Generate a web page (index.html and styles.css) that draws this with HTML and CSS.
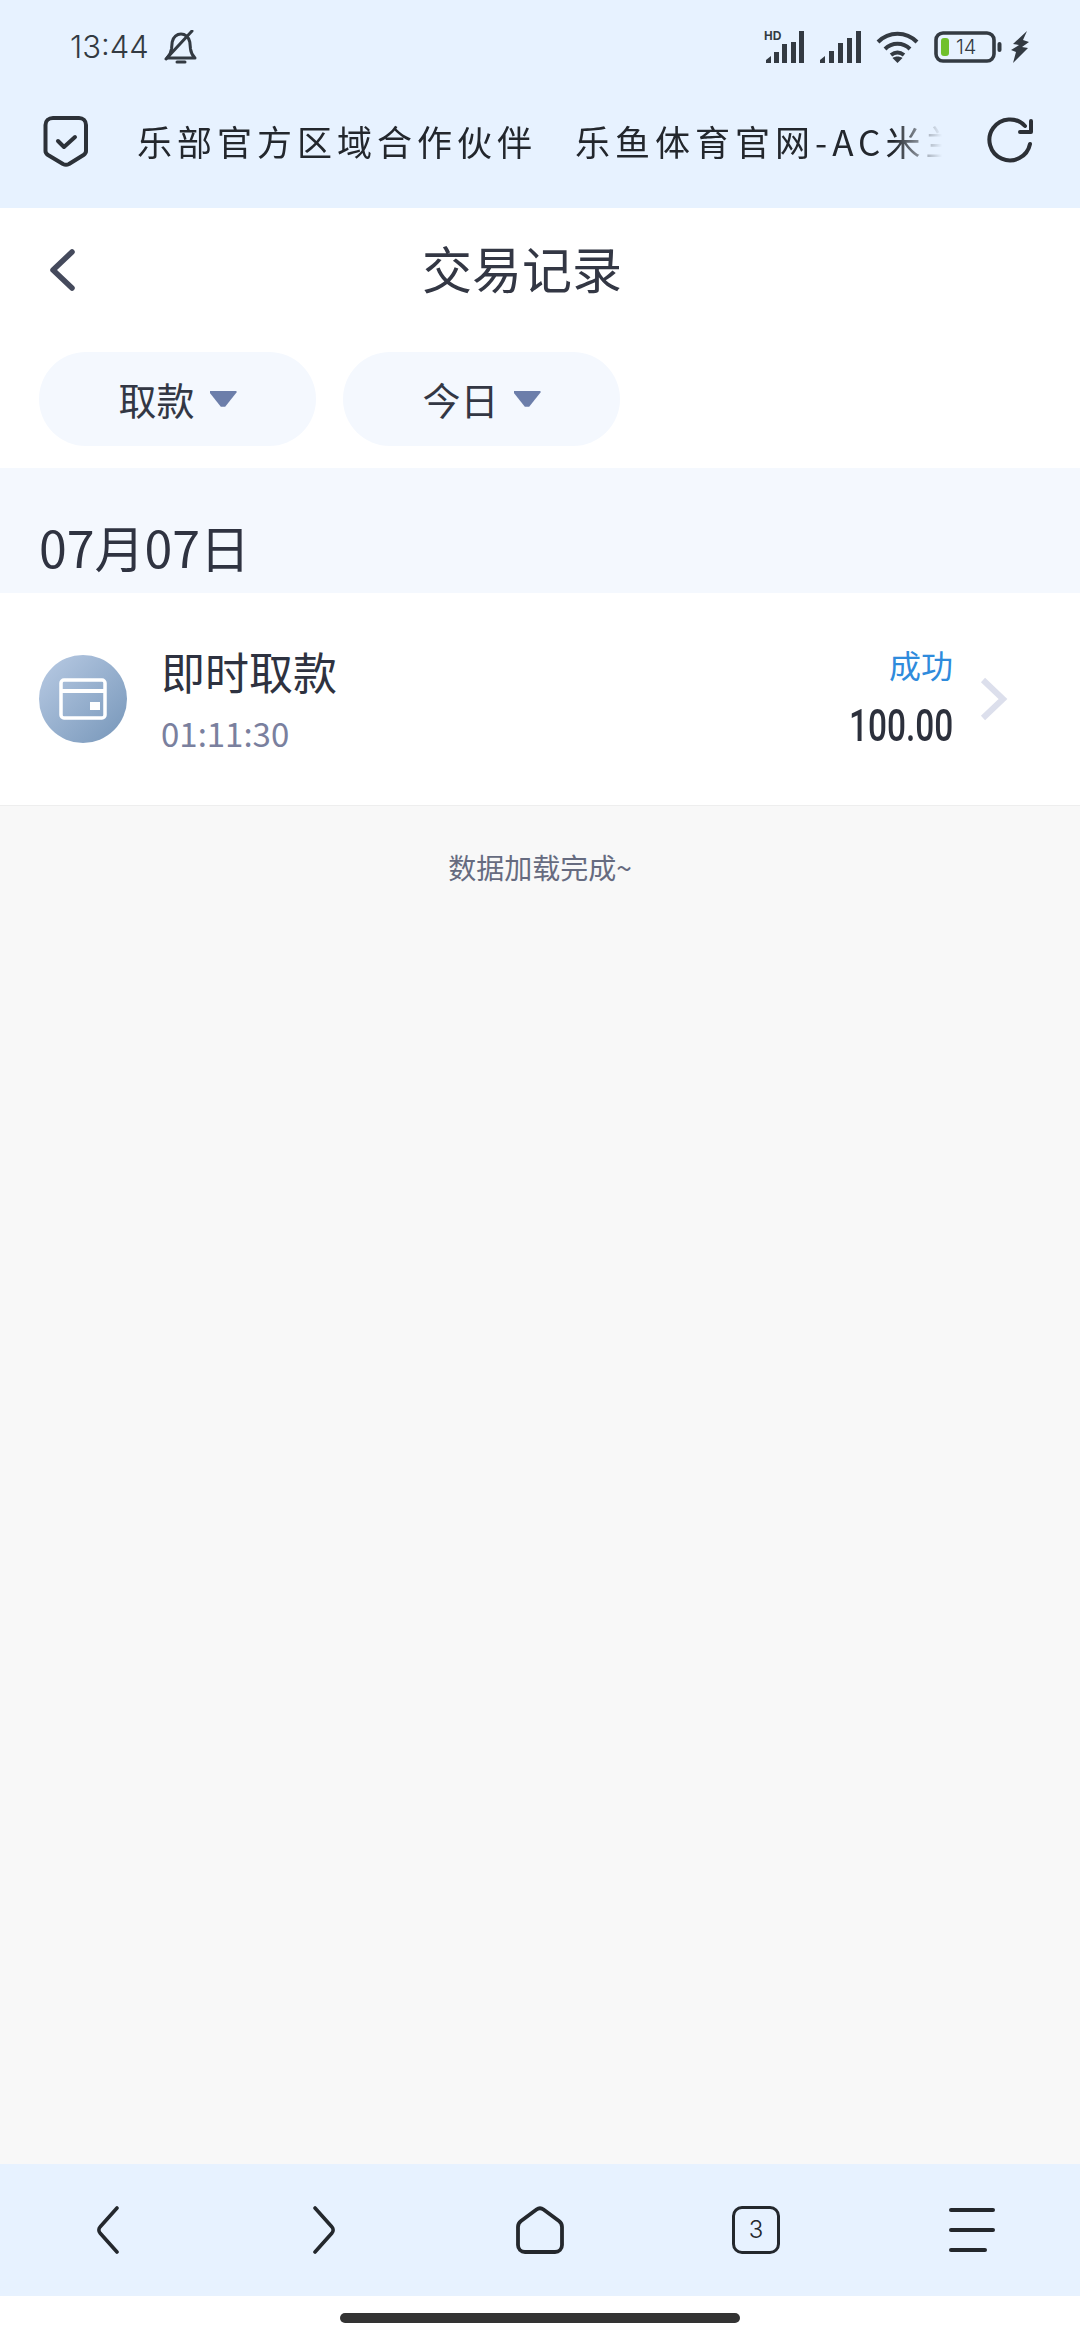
FILE: index.html
```html
<!DOCTYPE html>
<html lang="zh-CN">
<head>
<meta charset="utf-8">
<title>交易记录</title>
<link rel="stylesheet" href="styles.css">
</head>
<body>
<div class="page">
  <header class="browser-top">
    <div class="status">
      <div class="status-left">
        <span class="clock">13:44</span>
        <svg class="bell" viewBox="0 0 34 34" fill="none" stroke="#333a42" stroke-width="3" stroke-linecap="round" stroke-linejoin="round">
          <path d="M3 28h28c-3-3-4-5-4.500-9l-.7-7C25 7 21 4 17 4s-8 3-8.800 8l-.7 7C7 23 6 25 3 28z"/>
          <path d="M2 29L28 1"/>
          <path d="M13 32h8" stroke-width="3"/>
        </svg>
      </div>
      <div class="status-right">
        <svg class="sig-hd" viewBox="0 0 44 34">
          <text x="0" y="10" class="hd-text">HD</text>
          <path fill="#333a42" d="M2 33v-3l5-4v7zM10 33V22h5v11zM18 33V14h5v19zM27 33V12h5v21zM35 33V1h5v32z"/>
        </svg>
        <svg class="sig" viewBox="0 0 41 34">
          <path fill="#333a42" d="M0 33v-3l5-4v7zM9 33V21h5v12zM18 33V13h5v20zM27 33V8h5v25zM36 33V1h5v32z"/>
        </svg>
        <svg class="wifi" viewBox="0 0 43 34" fill="none" stroke="#333a42" stroke-width="4">
          <path d="M2 12C13 1 30 1 41 12"/>
          <path d="M9 19c7-7 18-7 25 0"/>
          <path d="M15 25c4-3 9-3 13 0"/>
          <path fill="#333a42" stroke="none" d="M21.500 33l-5-5c3-2 7-2 10 0z"/>
        </svg>
        <svg class="battery" viewBox="0 0 68 34">
          <rect x="2" y="3" width="58" height="28" rx="7" fill="none" stroke="#333a42" stroke-width="3.600"/>
          <rect x="7" y="8" width="8" height="18" rx="3" fill="#6fc02c"/>
          <text x="22" y="24" class="bat-text">14</text>
          <rect x="63.500" y="12" width="4" height="10" rx="2" fill="#333a42"/>
        </svg>
        <svg class="bolt" viewBox="0 0 20 34">
          <path fill="#333a42" d="M17 1L3 14l6 1-8 5 5 2-3 11 15-15-6-1 7-5-6-2z"/>
        </svg>
      </div>
    </div>
    <div class="address">
      <svg class="shield" viewBox="0 0 46 52" fill="none" stroke="#2c3138" stroke-width="4" stroke-linecap="round" stroke-linejoin="round">
        <path d="M10 3h26c4 0 7 3 7 7v26c0 2-1 3-2.500 4L26 49c-2 1-4 1-6 0L5 40c-1.500-1-2.500-2-2.500-4V10c0-4 3-7 7.500-7z"/>
        <path d="M15 26l6 6 11-10"/>
      </svg>
      <div class="marquee">
        <span class="mq-first">乐部官方区域合作伙伴</span><span class="mq-second">乐鱼体育官网-AC米兰</span>
      </div>
      <svg class="reload" viewBox="0 0 48 48" fill="none" stroke="#2c3036" stroke-width="4" stroke-linecap="round" stroke-linejoin="round">
        <path d="M43 27a20.500 20.500 0 1 1-5-18"/>
        <path d="M44 4v11H33"/>
      </svg>
    </div>
  </header>

  <section class="title-block">
    <div class="titlebar">
      <svg class="back" viewBox="0 0 28 42" fill="none" stroke="#454a5c" stroke-width="5.500" stroke-linecap="round" stroke-linejoin="round">
        <path d="M24 3L5 21l19 18"/>
      </svg>
      <h1 class="title">交易记录</h1>
    </div>
    <div class="filters">
      <button class="pill"><span>取款</span><i class="caret"></i></button>
      <button class="pill"><span>今日</span><i class="caret"></i></button>
    </div>
  </section>

  <div class="date-band">07月07日</div>

  <article class="record">
    <div class="avatar">
      <svg viewBox="0 0 48 42" class="card-icon">
        <rect x="2" y="2" width="44" height="38" rx="3" fill="none" stroke="#fff" stroke-width="3.500"/>
        <rect x="2" y="11" width="44" height="4" fill="#fff"/>
        <rect x="31" y="24" width="10" height="8" fill="#fff"/>
      </svg>
    </div>
    <div class="rec-main">
      <div class="rec-name">即时取款</div>
      <div class="rec-time">01:11:30</div>
    </div>
    <div class="rec-side">
      <div class="rec-status">成功</div>
      <div class="rec-amount">100.00</div>
    </div>
    <svg class="chev" viewBox="0 0 28 44" fill="none" stroke="#dcdfec" stroke-width="6">
      <path d="M3 3l20 19L3 41"/>
    </svg>
  </article>

  <main class="content">
    <p class="done">数据加载完成~</p>
  </main>

  <nav class="bottom-nav">
    <div class="nav-cell"><svg class="ni" viewBox="0 0 24 48" fill="none" stroke="#24282d" stroke-width="3.600" stroke-linecap="round" stroke-linejoin="round"><path d="M21 2L4 21c-1.500 1.500-1.500 4.500 0 6l17 19"/></svg></div>
    <div class="nav-cell"><svg class="ni" viewBox="0 0 24 48" fill="none" stroke="#24282d" stroke-width="3.600" stroke-linecap="round" stroke-linejoin="round"><path d="M3 2l17 19c1.500 1.500 1.500 4.500 0 6L3 46"/></svg></div>
    <div class="nav-cell"><svg class="nh" viewBox="0 0 48 48" fill="none" stroke="#24282d" stroke-width="3.800" stroke-linejoin="round"><path d="M20.500 3.500L5 15c-2 1.500-3 3.500-3 6v18c0 4 3 7 7 7h30c4 0 7-3 7-7V21c0-2.500-1-4.500-3-6L27.500 3.500c-2-1.500-5-1.500-7 0z"/></svg></div>
    <div class="nav-cell"><div class="tabs">3</div></div>
    <div class="nav-cell"><div class="menu"><i class="mline"></i><i class="mline"></i><i class="mline short"></i></div></div>
  </nav>
  <div class="gesture"><i class="gesture-bar"></i></div>
</div>
</body>
</html>
```
FILE: styles.css
```css
* { box-sizing: border-box; }
html, body { margin: 0; padding: 0; }
body { font-family: "Noto Sans CJK SC", "Noto Sans", sans-serif; background: #fff; }
.page { width: 1080px; height: 2340px; display: flex; flex-direction: column; overflow: hidden; }

.browser-top { height: 208px; background: #e7f2ff; display: flex; flex-direction: column; flex: none; }
.status { height: 94px; display: flex; justify-content: space-between; align-items: center; padding: 0 50px 0 70px; }
.status-left { display: flex; align-items: center; gap: 16px; }
.clock { font-family: Inter, Roboto, sans-serif; font-weight: 300; font-size: 31px; line-height: 36px; color: #333a42; width: 78px; }
.bell { width: 34px; height: 34px; display: block; }
.status-right { display: flex; align-items: center; }
.status-right svg { height: 34px; display: block; flex: none; }
.sig-hd { width: 44px; margin-right: 12px; }
.sig { width: 41px; margin-right: 15px; }
.wifi { width: 43px; margin-right: 15px; }
.battery { width: 68px; margin-right: 8px; }
.bolt { width: 20px; }
.hd-text { font-family: "Liberation Sans", sans-serif; font-weight: 700; font-size: 12px; fill: #333a42; }
.bat-text { font-family: Inter, sans-serif; font-weight: 300; font-size: 20px; fill: #333a42; }

.address { flex: 1; display: flex; align-items: center; padding: 0 45px 20px 43px; }
.shield { width: 46px; height: 52px; flex: none; display: block; }
.marquee { width: 810px; margin-left: 48px; white-space: nowrap; overflow: hidden; font-size: 35px; line-height: 50px; font-weight: 400; color: #23272d; letter-spacing: 5px;
  -webkit-mask-image: linear-gradient(to right, #000 94%, transparent 100%); mask-image: linear-gradient(to right, #000 94%, transparent 100%); }
.mq-second { margin-left: 38px; }
.reload { width: 48px; height: 48px; flex: none; margin-left: 45px; display: block; }

.title-block { background: #fff; height: 260px; flex: none; }
.titlebar { height: 124px; display: flex; align-items: center; padding-left: 48px; }
.back { width: 28px; height: 42px; display: block; flex: none; }
.title { margin: -6px 0 0 346px; font-size: 50px; line-height: 60px; font-weight: 400; color: #333744; }
.filters { display: flex; gap: 27px; padding: 20px 39px 0; }
.pill { width: 277px; height: 94px; border: 0; border-radius: 47px; background: #f4f8fe; display: flex; align-items: center; justify-content: center; gap: 15px; font-family: inherit; font-size: 38px; line-height: 50px; color: #333744; padding: 0; }
.caret { display: block; width: 27px; height: 17px; background: #6c7eaa; clip-path: polygon(0 0, 100% 0, 100% 12%, 58% 96%, 42% 96%, 0 12%); }

.date-band { height: 125px; flex: none; background: #f4f8fe; padding: 43px 0 0 39px; font-size: 50px; line-height: 70px; color: #2f3341; }

.record { height: 213px; flex: none; background: #fff; display: flex; align-items: center; padding: 0 75px 0 39px; border-bottom: 1px solid #eeeeee; }
.avatar { width: 88px; height: 88px; border-radius: 50%; background: linear-gradient(135deg, #b9cbe4, #7696b9); display: flex; align-items: center; justify-content: center; flex: none; }
.card-icon { width: 48px; height: 42px; display: block; }
.rec-main { margin-left: 34px; flex: 1; }
.rec-name { font-size: 44px; line-height: 60px; color: #2e3240; }
.rec-time { font-size: 33px; line-height: 48px; margin-top: 8px; color: #7a809e; }
.rec-side { display: flex; flex-direction: column; align-items: flex-end; }
.rec-status { font-size: 32px; line-height: 48px; margin-top: -4px; color: #2f8bdc; }
.rec-amount { font-family: Roboto, sans-serif; font-weight: 500; font-size: 44px; line-height: 56px; margin-top: 10px; color: #2c303c; transform: scaleX(0.76); transform-origin: right center; }
.chev { width: 28px; height: 44px; margin-left: 27px; margin-right: -3px; flex: none; display: block; }

.content { flex: 1; background: #f8f8f8; }
.done { margin: 41px 0 0; text-align: center; font-size: 28px; line-height: 40px; color: #666b80; }

.bottom-nav { height: 132px; flex: none; background: #e7f2ff; display: grid; grid-template-columns: repeat(5, 1fr); align-items: center; justify-items: center; }
.nav-cell { display: flex; align-items: center; justify-content: center; }
.ni { width: 24px; height: 48px; display: block; }
.nh { width: 48px; height: 48px; display: block; }
.tabs { width: 48px; height: 48px; border: 3.800px solid #24282d; border-radius: 10px; display: flex; align-items: center; justify-content: center; font-family: Inter, sans-serif; font-weight: 300; font-size: 24px; line-height: 28px; color: #24282d; }
.menu { width: 46px; height: 44px; display: flex; flex-direction: column; justify-content: space-between; }
.mline { display: block; height: 4px; width: 46px; border-radius: 2px; background: #24282d; }
.mline.short { width: 38px; }

.gesture { height: 44px; flex: none; background: #fff; display: flex; justify-content: center; padding-top: 17px; }
.gesture-bar { display: block; width: 400px; height: 10px; border-radius: 5px; background: #333333; }
```
